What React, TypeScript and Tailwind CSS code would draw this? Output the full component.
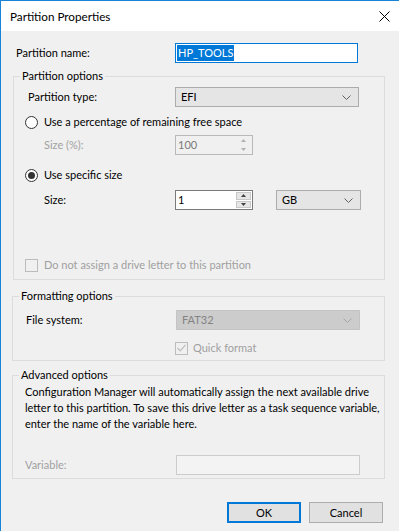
import React from 'react';

const Chevron = ({ color = '#606060' }: { color?: string }) => (
  <svg width="9" height="5" viewBox="0 0 9 5" className="shrink-0">
    <polyline points="0.5,0.5 4.5,4.5 8.5,0.5" fill="none" stroke={color} strokeWidth="1" />
  </svg>
);

const Combo = ({ value, width, disabled }: { value: string; width: string; disabled?: boolean }) => (
  <div
    className={`${width} h-[20px] flex items-center justify-between pl-[5px] pr-[7px] border ${
      disabled ? 'bg-[#cccccc] border-[#c4c4c4] text-[#838383]' : 'bg-[#e5e5e5] border-[#acacac] text-black'
    }`}
  >
    <span>{value}</span>
    <Chevron color={disabled ? '#a6a6a6' : '#606060'} />
  </div>
);

const Spin = ({ value, disabled }: { value: string; disabled?: boolean }) => {
  const arrow = disabled ? '#b0b0b0' : '#404040';
  return (
    <div
      className={`w-[78px] h-[20px] flex border ${
        disabled ? 'bg-[#f0f0f0] border-[#b9b9b9] text-[#7a7a7a]' : 'bg-white border-[#7a7a7a] text-black'
      }`}
    >
      <span className="flex-1 pl-[2px] leading-[18px]">{value}</span>
      <div className="w-[16px] flex flex-col py-[1px] pr-[1px] gap-[1px]">
        <div className={`flex-1 flex items-center justify-center ${disabled ? '' : 'bg-[#e6e6e6] border border-[#c8c8c8]'}`}>
          <svg width="5" height="3" viewBox="0 0 5 3"><polygon points="2.5,0 5,3 0,3" fill={arrow} /></svg>
        </div>
        <div className={`flex-1 flex items-center justify-center ${disabled ? '' : 'bg-[#e6e6e6] border border-[#c8c8c8]'}`}>
          <svg width="5" height="3" viewBox="0 0 5 3"><polygon points="0,0 5,0 2.5,3" fill={arrow} /></svg>
        </div>
      </div>
    </div>
  );
};

const Radio = ({ checked }: { checked?: boolean }) => (
  <span className="w-[13px] h-[13px] rounded-full border border-[#333333] bg-white flex items-center justify-center shrink-0">
    {checked && <span className="w-[7px] h-[7px] rounded-full bg-[#333333]" />}
  </span>
);

const Check = ({ checked }: { checked?: boolean }) => (
  <span className="w-[13px] h-[13px] border border-[#bcbcbc] bg-[#f0f0f0] flex items-center justify-center shrink-0">
    {checked && (
      <svg width="9" height="8" viewBox="0 0 9 8">
        <polyline points="0.5,4 3.2,6.8 8.5,0.8" fill="none" stroke="#bcbcbc" strokeWidth="1.2" />
      </svg>
    )}
  </span>
);

const App: React.FC = () => {
  return (
    <div className="w-[399px] h-[531px] bg-[#f0f0f0] border-l border-t border-[#1883d7] flex flex-col font-['Lato',sans-serif] text-[11px] leading-[16px] text-black overflow-hidden">
      {/* title bar */}
      <div className="h-[30px] bg-white flex items-center justify-between pl-[9px] pr-[8px] shrink-0">
        <span className="text-[11.7px]">Partition Properties</span>
        <svg width="11" height="11" viewBox="0 0 11 11" className="mr-[1px]">
          <line x1="0.5" y1="0.5" x2="10.5" y2="10.5" stroke="#000" strokeWidth="1" />
          <line x1="10.5" y1="0.5" x2="0.5" y2="10.5" stroke="#000" strokeWidth="1" />
        </svg>
      </div>

      <div className="flex-1 flex flex-col pl-[11px] pt-[12px]">
        <div className="flex items-center h-[20px]">
          <span className="w-[163px] pl-[4px]">Partition name:</span>
          <div className="w-[183px] h-[20px] border border-[#0078d7] bg-white flex items-center pl-[1px]">
            <span className="bg-[#0078d7] text-white px-px">HP_TOOLS</span>
          </div>
        </div>

        <fieldset className="mt-[5px] ml-px w-[372px] border border-[#dcdcdc] pb-[4px]">
          <legend className="ml-[6px] px-[2px]">Partition options</legend>
          <div className="flex items-center h-[20px] mt-[3px]">
            <span className="w-[161px] pl-[14px]">Partition type:</span>
            <Combo value="EFI" width="w-[184px]" />
          </div>
          <div className="flex items-center h-[20px] mt-[5px] pl-[11px] gap-[6px]">
            <Radio />
            <span>Use a percentage of remaining free space</span>
          </div>
          <div className="flex items-center h-[20px] mt-[3px]">
            <span className="w-[161px] pl-[30px] text-[#a0a0a0]">Size (%):</span>
            <Spin value="100" disabled />
          </div>
          <div className="flex items-center h-[20px] mt-[10px] pl-[11px] gap-[6px]">
            <Radio checked />
            <span>Use specific size</span>
          </div>
          <div className="flex items-center h-[20px] mt-[5px]">
            <span className="w-[161px] pl-[30px]">Size:</span>
            <Spin value="1" />
            <div className="ml-[23px]">
              <Combo value="GB" width="w-[85px]" />
            </div>
          </div>
          <div className="flex items-center h-[20px] mt-[45px] pl-[11px] gap-[6px] text-[#a0a0a0]">
            <Check />
            <span>Do not assign a drive letter to this partition</span>
          </div>
        </fieldset>

        <fieldset className="mt-[8px] w-[373px] border border-[#dcdcdc] pb-[4px]">
          <legend className="ml-[6px] px-[2px]">Formatting options</legend>
          <div className="flex items-center h-[20px] mt-[6px]">
            <span className="w-[163px] pl-[13px]">File system:</span>
            <Combo value="FAT32" width="w-[184px]" disabled />
          </div>
          <div className="flex items-center h-[16px] mt-[10px] pl-[162px] gap-[5px] text-[#a0a0a0]">
            <Check checked />
            <span>Quick format</span>
          </div>
        </fieldset>

        <fieldset className="mt-[6px] w-[373px] border border-[#dcdcdc] pb-[3px]">
          <legend className="ml-[6px] px-[2px]">Advanced options</legend>
          <p className="pl-[12px] whitespace-nowrap pt-px">
            Configuration Manager will automatically assign the next available drive
            <br />
            letter to this partition. To save this drive letter as a task sequence variable,
            <br />
            enter the name of the variable here.
          </p>
          <div className="flex items-center h-[20px] mt-[23px]">
            <span className="w-[163px] pl-[12px] text-[#a0a0a0]">Variable:</span>
            <div className="w-[184px] h-[20px] border border-[#cccccc] bg-[#f3f3f3]" />
          </div>
        </fieldset>

        <div className="flex justify-end gap-[8px] mt-[23px] w-[373px] pr-[2px]">
          <button className="w-[74px] h-[21px] bg-[#e1e1e1] border-2 border-[#0078d7] text-black">OK</button>
          <button className="w-[74px] h-[21px] bg-[#e1e1e1] border border-[#adadad] text-black">Cancel</button>
        </div>
      </div>
    </div>
  );
};

export default App;
